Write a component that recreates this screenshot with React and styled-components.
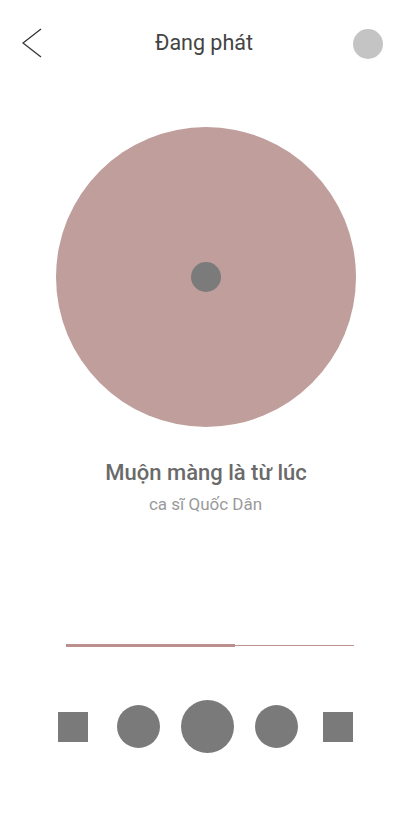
import React from 'react'
import styled, { createGlobalStyle } from 'styled-components';

const GlobalStyle = createGlobalStyle`
  body {
    margin: 0;
    background: #fff;
    font-family: Roboto, "Noto Sans", sans-serif;
  }
`;

const Screen = styled.div`
  width: 411px;
  height: 823px;
  display: flex;
  flex-direction: column;
  align-items: center;
`;

const Header = styled.div`
  width: 100%;
  height: 86px;
  box-sizing: border-box;
  padding: 0 28px 0 22px;
  display: grid;
  grid-template-columns: 1fr auto 1fr;
  align-items: center;
`;

const BackButton = styled.button`
  justify-self: start;
  width: 20px;
  height: 30px;
  padding: 0;
  border: none;
  background: none;
  display: flex;
  margin-top: -1px;
`;

const Title = styled.div`
  font-size: 21.5px;
  color: #444;
  line-height: 26px;
  margin-left: 3px;
`;

const Avatar = styled.div`
  justify-self: end;
  width: 30px;
  height: 30px;
  border-radius: 50%;
  background: #c4c4c4;
  margin-top: 2px;
`;

const Disc = styled.div`
  margin-top: 41px;
  width: 300px;
  height: 300px;
  border-radius: 50%;
  background: #bf9e9c;
  display: flex;
  align-items: center;
  justify-content: center;
`;

const DiscHole = styled.div`
  width: 30px;
  height: 30px;
  border-radius: 50%;
  background: #7b7b7b;
`;

const SongTitle = styled.div`
  margin-top: 33px;
  padding-left: 1px;
  font-size: 22px;
  line-height: 26px;
  font-weight: 500;
  color: #6a6a6a;
`;

const Artist = styled.div`
  margin-top: 8px;
  font-size: 17px;
  line-height: 20px;
  color: #9a9a9a;
`;

const Progress = styled.div`
  margin-top: 130px;
  margin-left: 8px;
  width: 288px;
  height: 3px;
  position: relative;
  display: flex;
  align-items: center;
`;

const Track = styled.div`
  width: 100%;
  height: 1px;
  background: #bb9492;
`;

const Fill = styled.div`
  position: absolute;
  left: 0;
  top: 0;
  height: 3px;
  background: #bb8f8c;
`;

const Controls = styled.div`
  margin-top: 53px;
  width: 100%;
  box-sizing: border-box;
  padding-left: 58px;
  height: 53px;
  display: flex;
  align-items: center;
`;

const Control = styled.button`
  flex: none;
  margin-left: ${p => p.gap || 0}px;
  width: ${p => p.size}px;
  height: ${p => p.size}px;
  border-radius: ${p => (p.round ? '50%' : '0')};
  background: #7b7a7b;
  border: none;
  padding: 0;
`;

function App() {
  const progress = 0.587;
  return (
    <Screen>
      <GlobalStyle />
      <Header>
        <BackButton>
          <svg width="20" height="30" viewBox="0 0 20 30">
            <polyline points="19,1 1,15 19,29" fill="none" stroke="#333" strokeWidth="1.3" />
          </svg>
        </BackButton>
        <Title>Đang phát</Title>
        <Avatar />
      </Header>
      <Disc>
        <DiscHole />
      </Disc>
      <SongTitle>Muộn màng là từ lúc</SongTitle>
      <Artist>ca sĩ Quốc Dân</Artist>
      <Progress>
        <Track />
        <Fill style={{ width: `${progress * 100}%` }} />
      </Progress>
      <Controls>
        <Control size={30} />
        <Control size={43} gap={29} round />
        <Control size={53} gap={21} round />
        <Control size={43} gap={21} round />
        <Control size={30} gap={25} />
      </Controls>
    </Screen>
  )
}

export default App
